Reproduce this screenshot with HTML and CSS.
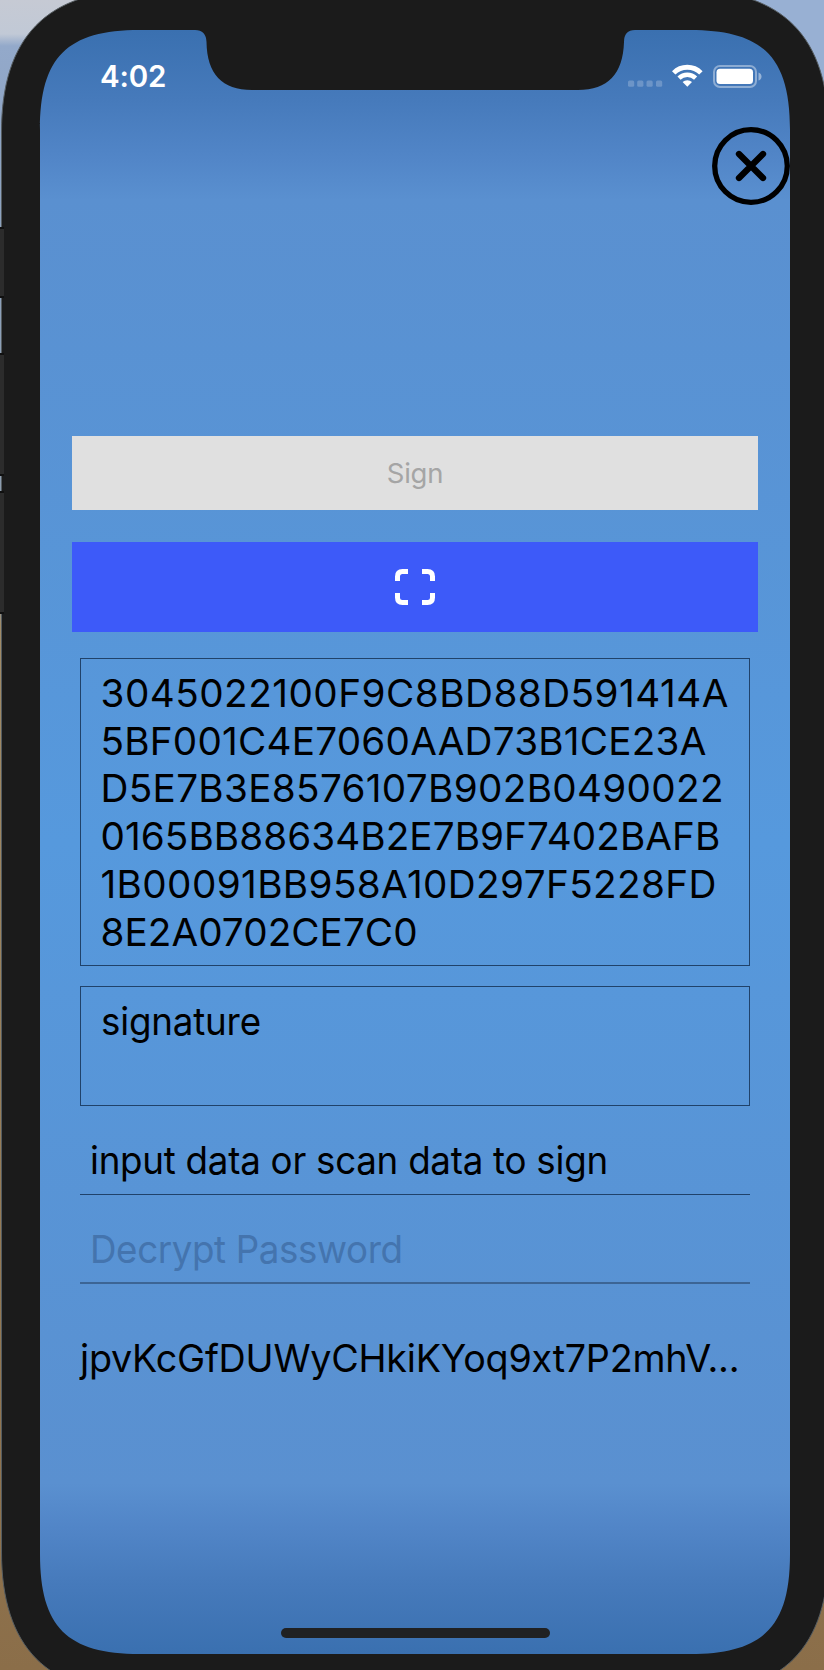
FILE: index.html
```html
<!DOCTYPE html>
<html lang="en">
<head>
<meta charset="utf-8">
<title>Sign</title>
<link rel="stylesheet" href="styles.css">
</head>
<body>
<main class="device">
  <svg class="frame" viewBox="0 0 824 1670" aria-hidden="true">
    <defs>
      <linearGradient id="screen" x1="0" y1="30" x2="0" y2="1654" gradientUnits="userSpaceOnUse">
        <stop offset="0" stop-color="#3a70b0"/>
        <stop offset=".043" stop-color="#467abb"/>
        <stop offset=".08" stop-color="#5286c8"/>
        <stop offset=".105" stop-color="#5a90d0"/>
        <stop offset=".5" stop-color="#5699dd"/>
        <stop offset=".895" stop-color="#5a90d0"/>
        <stop offset=".92" stop-color="#5286c8"/>
        <stop offset=".957" stop-color="#467abb"/>
        <stop offset="1" stop-color="#3a70b0"/>
      </linearGradient>
    </defs>
    <path d="M700 0H824V120H700Z" fill="#98b0d3"/>
    <path d="M1.5 132C1.5 37 47-10 142-10H688C783-10 828.500 37 828.500 132V1552C828.500 1647 783 1694 688 1694H142C47 1694 1.500 1647 1.500 1552Z" fill="#1b1b1b" stroke="#565d61"/>
    <path d="M0 228h4v69H0zM0 354h4v121H0zM0 492h4v121H0z" fill="#2c2c2c"/>
    <path d="M0 228h4M0 297h4M0 354h4M0 475h4M0 492h4M0 613h4" stroke="#101010" stroke-width="2"/>
    <path d="M140 30H195Q206 30 206.500 42C207 74 222 90 252 90H578C608 90 623 74 624 42Q624 30 635 30H690C763 30 790 57 790 130V1554C790 1627 763 1654 690 1654H140C67 1654 40 1627 40 1554V130C40 57 67 30 140 30Z" fill="url(#screen)"/>
  </svg>

  <header class="status">
    <span class="time">4:02</span>
    <svg class="indicators" width="136" height="30" viewBox="0 0 136 30" aria-hidden="true">
      <g fill="#fff" fill-opacity=".22">
        <rect x="2" y="19.500" width="6.200" height="6.200" rx="1.500"/><rect x="11.200" y="19.500" width="6.200" height="6.200" rx="1.500"/>
        <rect x="20.500" y="19.500" width="6.200" height="6.200" rx="1.500"/><rect x="30" y="19.500" width="6.200" height="6.200" rx="1.500"/>
      </g>
      <path d="M61.300 25.800 56.600 21.100A6.700 6.700 0 0 1 66 21.100Z" fill="#fff"/>
      <g fill="none" stroke="#fff">
        <path d="M53 17.100A11.800 11.800 0 0 1 69.600 17.100" stroke-width="4.400"/>
        <path d="M47.700 11.900A19.200 19.200 0 0 1 74.900 11.900" stroke-width="4.800"/>
      </g>
      <rect x="88" y="5" width="42" height="21" rx="6" fill="none" stroke="#fff" stroke-opacity=".4" stroke-width="2"/>
      <rect x="90.500" y="7.700" width="36.500" height="15.300" rx="3.500" fill="#fff"/>
      <path d="M132.500 11.500Q135.500 12.500 135.500 15.500T132.500 19.500Z" fill="#fff" fill-opacity=".45"/>
    </svg>
  </header>

  <button class="close" aria-label="Close">
    <svg width="78" height="78" viewBox="0 0 78 78" fill="none" stroke="#000">
      <circle cx="39" cy="39" r="36.300" stroke-width="5.300"/>
      <path d="M27 27 51 51M51 27 27 51" stroke-width="6.300" stroke-linecap="round"/>
    </svg>
  </button>

  <section class="form">
    <button class="btn sign"><span>Sign</span></button>
    <button class="btn scan" aria-label="Scan">
      <svg width="40" height="36" viewBox="0 0 40 36" fill="none" stroke="#fff" stroke-width="5">
        <path d="M2.500 12V7.500Q2.500 2.500 7.500 2.500H13M27 2.500H32.500Q37.500 2.500 37.500 7.500V12M37.500 24V28.500Q37.500 33.500 32.500 33.500H27M13 33.500H7.500Q2.500 33.500 2.500 28.500V24"/>
      </svg>
    </button>
    <div class="box key">
      <span class="l1">3045022100F9C8BD88D591414A</span>
      <span class="l2">5BF001C4E7060AAD73B1CE23A</span>
      <span class="l3">D5E7B3E8576107B902B0490022</span>
      <span class="l4">0165BB88634B2E7B9F7402BAFB</span>
      <span class="l5">1B00091BB958A10D297F5228FD</span>
      <span class="l6">8E2A0702CE7C0</span>
    </div>
    <div class="box result"><span class="narrow">signature</span></div>
    <div class="field data"><span class="narrow">input data or scan data to sign</span></div>
    <div class="field password"><span class="narrow">Decrypt Password</span></div>
    <p class="address"><span class="narrow">jpvKcGfDUWyCHkiKYoq9xt7P2mhV...</span></p>
  </section>
  <div class="home"></div>
</main>
</body>
</html>
```
FILE: styles.css
```css
* { box-sizing: border-box; }

body {
  margin: 0;
  font-family: Inter, "Liberation Sans", sans-serif;
  color: #000;
  background: linear-gradient(#c6cad4 0, #c1c9d6 34px, #93a9ca 46px, #8ea4c3 150px, #8c9aa8 600px, #a18c68 625px, #8b6e49 1670px);
}

.device {
  position: relative;
  display: flex;
  flex-direction: column;
  width: 824px;
  height: 1670px;
  overflow: hidden;
}

.frame {
  position: absolute;
  inset: 0;
  width: 824px;
  height: 1670px;
}

.status, .close, .form, .home { position: relative; }

.status {
  display: flex;
  justify-content: space-between;
  align-items: flex-start;
  height: 127px;
  padding: 61px 62px 0 100px;
}

.time {
  font-size: 29.500px;
  font-weight: 600;
  line-height: 31px;
  letter-spacing: -.2px;
  color: #fff;
}

.close {
  display: block;
  width: 78px;
  height: 78px;
  margin-left: 712px;
  padding: 0;
  border: 0;
  background: none;
}

.close svg { display: block; }

.form {
  display: flex;
  flex-direction: column;
  margin: 231px 66px 0 72px;
  font-size: 38.700px;
}

.btn {
  display: flex;
  align-items: center;
  justify-content: center;
  padding: 0;
  border: 0;
  border-radius: 0;
  font-family: inherit;
}

.sign {
  height: 74px;
  font-size: 27.500px;
  letter-spacing: -.2px;
  color: #a5a5a5;
  background: #e0e0e0;
}

.scan {
  height: 90px;
  margin-top: 32px;
  background: #3d5af9;
}

.box {
  display: flex;
  flex-direction: column;
  align-items: flex-start;
  margin: 0 8px;
  padding: 11px 20px 0;
  border: 1px solid #20426a;
  line-height: 47.700px;
  white-space: nowrap;
}

.key { height: 308px; margin-top: 26px; }
.result { height: 120px; margin-top: 20px; letter-spacing: -.200px; }

.key span { margin-left: -.5px; }
.l1 { letter-spacing: .480px; }
.l2 { letter-spacing: .220px; }
.l3 { letter-spacing: .320px; }
.l4 { letter-spacing: .070px; }
.l5 { letter-spacing: .380px; }
.l6 { letter-spacing: .050px; }

.narrow {
  display: inline-block;
  transform: scaleX(.95);
  transform-origin: 0 50%;
}

.field {
  margin: 0 8px;
  padding: 30px 10px 0;
  border-bottom: 1px solid #20426a;
  line-height: 48px;
  white-space: nowrap;
}

.data {
  height: 89px;
  letter-spacing: -.280px;
}

.password {
  height: 89px;
  letter-spacing: -.420px;
  color: #4474ae;
  border-bottom: 2px solid #3c6595;
}

.address {
  margin: 50px 8px 0;
  line-height: 48px;
  letter-spacing: -.260px;
  white-space: nowrap;
}

.address .narrow { transform: scaleX(.975); }

.home {
  width: 269px;
  height: 10px;
  margin: auto 0 32px 281px;
  border-radius: 5px;
  background: #202122;
}
```
